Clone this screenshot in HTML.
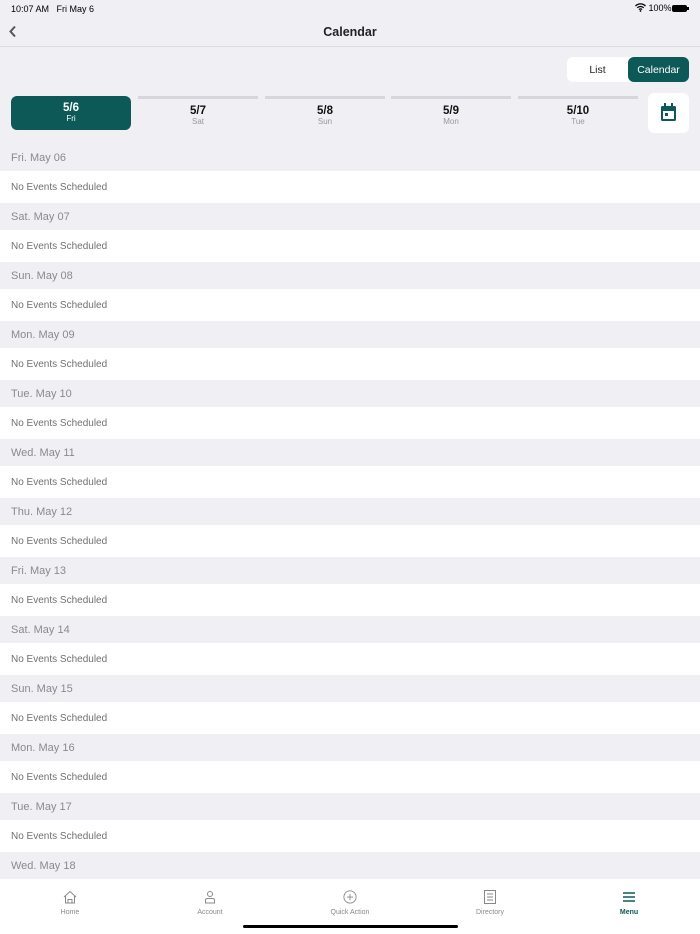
<!DOCTYPE html>
<html><head><meta charset="utf-8"><style>
*{margin:0;padding:0;box-sizing:border-box}
body{width:700px;height:934px;overflow:hidden;background:#efeff4;font-family:"Liberation Sans",sans-serif;position:relative}
.abs{position:absolute}
.status{top:4px;font-size:9px;color:#000}
.nav{top:0;left:0;width:700px;height:47px;border-bottom:1px solid #dcdce0}
.title{top:25px;width:700px;text-align:center;font-size:12.5px;font-weight:bold;color:#222}
.seg{top:57px;left:567px;width:122px;height:25px;background:#fff;border-radius:6px}
.seg .a{position:absolute;left:0;top:0;width:61px;height:25px;line-height:26px;text-align:center;font-size:10.5px;color:#222}
.seg .b{position:absolute;left:61px;top:0;width:61px;height:25px;line-height:26px;text-align:center;font-size:10.5px;color:#fff;background:#0d5957;border-radius:6px}
.day{top:96px;width:120px;height:34px;text-align:center;border-top:3px solid #d6d6dc}
.day b{display:block;font-size:11.5px;margin-top:6px;color:#111}
.day span{display:block;font-size:8px;color:#999}
.day.sel{background:#0d5957;border:none;border-radius:6px}
.day.sel b{margin-top:6px;color:#fff}.day.sel span{color:#fff}
.cal{top:93px;left:648px;width:41px;height:40px;background:#fff;border-radius:6px}
.list{top:144px;left:0;width:700px}
.h{height:27px;line-height:29px;padding-left:11px;font-size:11px;color:#8a8a8e}
.r{height:32px;line-height:34px;padding-left:11px;font-size:10px;color:#707070;background:#fff}
.tab{top:879px;left:0;width:700px;height:55px;background:#fff}
.t{position:absolute;top:11px;width:80px;text-align:center;font-size:7px;color:#888}
.t svg{display:block;margin:0 auto 5px}
.home{top:925px;left:243px;width:215px;height:3px;border-radius:2px;background:#000}
</style></head><body>
<div class="abs nav"></div>
<div class="abs status" style="left:11px">10:07 AM&nbsp;&nbsp;&nbsp;Fri May 6</div>
<div class="abs status" style="left:635px;top:3px">
<svg width="11" height="9" viewBox="0 0 11 9" style="vertical-align:-1px"><path d="M0.5 3a7 7 0 0 1 10 0M2.3 4.8a4.5 4.5 0 0 1 6.4 0M4 6.6a2 2 0 0 1 3 0" stroke="#000" stroke-width="1.3" fill="none"/><circle cx="5.5" cy="8" r="0.9"/></svg> 100%</div>
<div class="abs" style="left:672px;top:5px;width:15px;height:7px;background:#000;border-radius:2px"></div>
<div class="abs" style="left:687px;top:7px;width:1.5px;height:3px;background:#000"></div>
<svg class="abs" style="left:8px;top:25px" width="10" height="13" viewBox="0 0 10 13"><path d="M7 1.5L2.5 6.5L7 11.5" stroke="#555" stroke-width="2" fill="none"/></svg>
<div class="abs title">Calendar</div>
<div class="abs seg"><div class="a">List</div><div class="b">Calendar</div></div>
<div class="abs day sel" style="left:11px"><b>5/6</b><span>Fri</span></div>
<div class="abs day" style="left:138px"><b>5/7</b><span>Sat</span></div>
<div class="abs day" style="left:265px"><b>5/8</b><span>Sun</span></div>
<div class="abs day" style="left:391px"><b>5/9</b><span>Mon</span></div>
<div class="abs day" style="left:518px"><b>5/10</b><span>Tue</span></div>
<div class="abs cal"><svg style="position:absolute;left:12px;top:10px" width="17" height="19" viewBox="0 0 17 19"><rect x="1" y="3" width="15" height="15" rx="1.5" fill="#0d5957"/><rect x="3" y="8" width="11" height="8" fill="#fff"/><rect x="4" y="0" width="2" height="4" fill="#0d5957"/><rect x="11" y="0" width="2" height="4" fill="#0d5957"/><rect x="5" y="10" width="3" height="3" fill="#0d5957"/></svg></div>
<div class="abs list">
<div class="h">Fri. May 06</div><div class="r">No Events Scheduled</div>
<div class="h">Sat. May 07</div><div class="r">No Events Scheduled</div>
<div class="h">Sun. May 08</div><div class="r">No Events Scheduled</div>
<div class="h">Mon. May 09</div><div class="r">No Events Scheduled</div>
<div class="h">Tue. May 10</div><div class="r">No Events Scheduled</div>
<div class="h">Wed. May 11</div><div class="r">No Events Scheduled</div>
<div class="h">Thu. May 12</div><div class="r">No Events Scheduled</div>
<div class="h">Fri. May 13</div><div class="r">No Events Scheduled</div>
<div class="h">Sat. May 14</div><div class="r">No Events Scheduled</div>
<div class="h">Sun. May 15</div><div class="r">No Events Scheduled</div>
<div class="h">Mon. May 16</div><div class="r">No Events Scheduled</div>
<div class="h">Tue. May 17</div><div class="r">No Events Scheduled</div>
<div class="h">Wed. May 18</div>
</div>
<div class="abs tab">
<div class="t" style="left:30px"><svg width="14" height="14" viewBox="0 0 14 14"><path d="M1 7L7 1.5L13 7M2.5 6v7h9V6M5 13V9.5h4V13" stroke="#888" fill="none"/></svg>Home</div>
<div class="t" style="left:170px"><svg width="14" height="14" viewBox="0 0 14 14"><circle cx="7" cy="4" r="2.5" stroke="#888" fill="none"/><path d="M2.5 13v-2.5q0-2 2-2h5q2 0 2 2V13z" stroke="#888" fill="none"/></svg>Account</div>
<div class="t" style="left:310px"><svg width="16" height="14" viewBox="0 0 16 16"><circle cx="8" cy="8" r="7" stroke="#888" fill="none"/><path d="M8 4.5v7M4.5 8h7" stroke="#888"/></svg>Quick Action</div>
<div class="t" style="left:450px"><svg width="14" height="14" viewBox="0 0 14 14"><rect x="1.5" y="0.5" width="11" height="13" stroke="#888" fill="none"/><path d="M4 4h6M4 7h6M4 10h6" stroke="#888"/></svg>Directory</div>
<div class="t" style="left:589px;color:#0d5957;font-weight:bold"><svg width="14" height="14" viewBox="0 0 14 14"><path d="M1 3h12M1 7h12M1 11h12" stroke="#0d5957" stroke-width="1.6"/></svg>Menu</div>
</div>
<div class="abs home"></div>
</body></html>
